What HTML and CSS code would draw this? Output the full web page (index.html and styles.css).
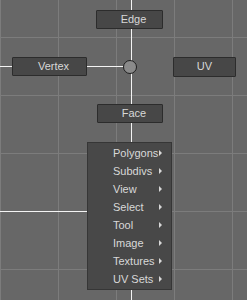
FILE: index.html
```html
<!DOCTYPE html>
<html lang="en">
<head>
  <meta charset="UTF-8" />
  <meta name="viewport" content="width=device-width, initial-scale=1.0" />
  <title>Marking Menu</title>
  <link rel="stylesheet" href="styles.css">
</head>
<body>
  <div class="stage">
    <!-- drag wires -->
    <div class="wire wire-v"></div>
    <div class="wire wire-h"></div>
    <div class="wire wire-menu"></div>

    <!-- Compass items -->
    <div class="compass">
      <div class="item north">Edge</div>
      <div class="item west">Vertex</div>
      <div class="hub"></div>
      <div class="item east">UV</div>
      <div class="item south">Face</div>
    </div>

    <!-- Overflow menu -->
    <ul class="menu">
      <li>Polygons<span class="arrow"></span></li>
      <li>Subdivs<span class="arrow"></span></li>
      <li>View<span class="arrow"></span></li>
      <li>Select<span class="arrow"></span></li>
      <li>Tool<span class="arrow"></span></li>
      <li>Image<span class="arrow"></span></li>
      <li>Textures<span class="arrow"></span></li>
      <li>UV Sets<span class="arrow"></span></li>
    </ul>
  </div>
</body>
</html>
```
FILE: styles.css
```css
* { margin: 0; padding: 0; box-sizing: border-box; }
body, html {
  width: 100%;
  height: 100%;
  overflow: hidden;
}
body {
  background-color: #676767;
  background-image:
    linear-gradient(to right, #7c7c7c 1px, transparent 1px),
    linear-gradient(to bottom, #7c7c7c 1px, transparent 1px);
  background-size: 58px 58px;
  background-position: 0 37px;
  font-family: "Liberation Sans", Arial, sans-serif;
  font-size: 11px;
  color: #d8d8d8;
}
.stage { position: relative; width: 247px; height: 300px; padding-top: 10px; }

.wire { position: absolute; background: #f4f4f4; }
.wire-v { left: 131px; top: 0; width: 1px; height: 300px; }
.wire-h { left: 0; top: 66px; width: 125px; height: 1px; }
.wire-menu { left: 0; top: 211px; width: 87px; height: 1px; }

.compass {
  position: relative;
  display: grid;
  grid-template-columns: 75px 67px 64px;
  grid-template-rows: 19px 19px 19px;
  column-gap: 9px;
  row-gap: 28px;
  padding-left: 12px;
}
.item {
  background: #474747;
  border: 1px solid #2c2c2c;
  border-radius: 1px;
  line-height: 17px;
  text-align: center;
  padding-left: 8px;
}
.north { grid-column: 2; grid-row: 1; }
.west { grid-column: 1; grid-row: 2; }
.east { grid-column: 3; grid-row: 2; margin-left: 1px; height: 20px; padding-left: 0; }
.south { grid-column: 2; grid-row: 3; margin-left: 1px; }
.hub {
  grid-column: 2; grid-row: 2;
  justify-self: center; align-self: center;
  width: 14px; height: 14px;
  margin-left: 1px;
  border-radius: 50%;
  background: #8a8a8a;
  border: 1px solid #1e1e1e;
}

.menu {
  position: relative;
  list-style: none;
  width: 85px;
  margin: 19px 0 0 87px;
  padding: 1px 0;
  background: #484848;
  border: 1px solid #363636;
}
.menu li {
  display: flex;
  align-items: center;
  height: 18px;
  padding-left: 25px;
  position: relative;
}
.arrow {
  position: absolute;
  left: 71px;
  top: 6px;
  width: 0; height: 0;
  border-top: 3px solid transparent;
  border-bottom: 3px solid transparent;
  border-left: 3px solid #d8d8d8;
}
```
